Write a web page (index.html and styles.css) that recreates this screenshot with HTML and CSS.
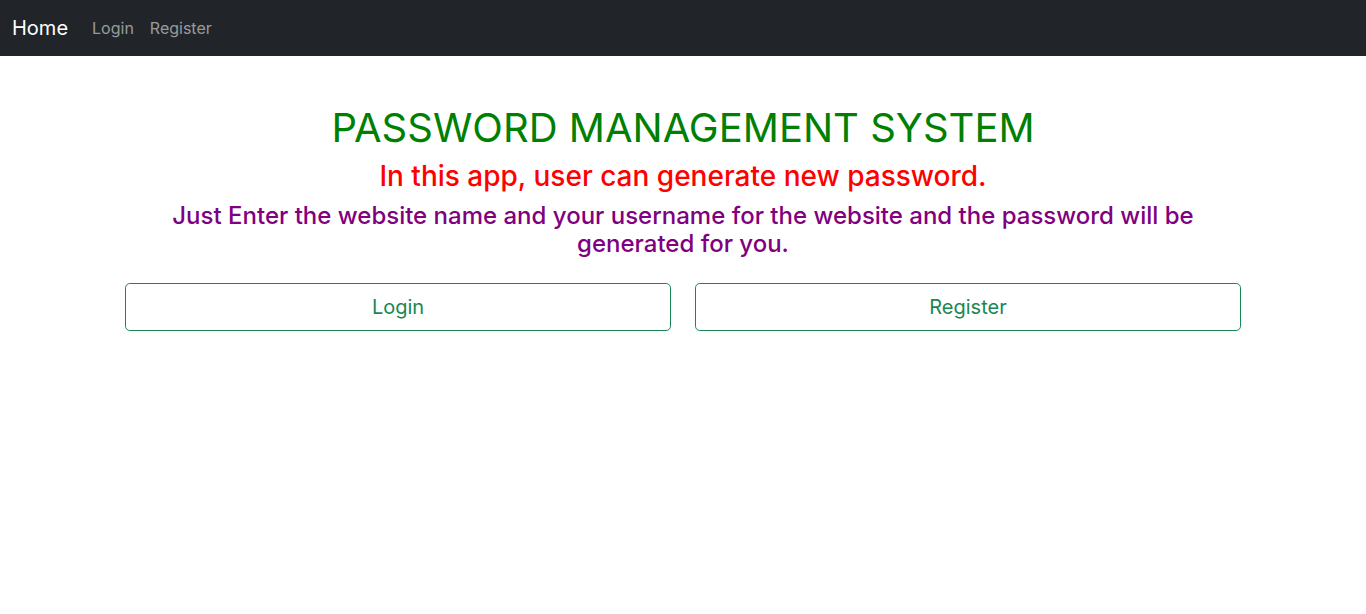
FILE: index.html
```html
<!DOCTYPE html>
<html lang="en">
<head>
<meta charset="utf-8">
<title>Password Management System</title>
<link rel="stylesheet" href="styles.css">
</head>
<body>
<nav class="navbar">
  <div class="navbar-inner">
    <a class="brand" href="#">Home</a>
    <ul class="nav">
      <li><a class="nav-link" href="#">Login</a></li>
      <li><a class="nav-link" href="#">Register</a></li>
    </ul>
  </div>
</nav>
<main class="container">
  <h1 class="title">PASSWORD MANAGEMENT SYSTEM</h1>
  <h3 class="subtitle">In this app, user can generate new password.</h3>
  <h4 class="desc">Just Enter the website name and your username for the website and the password will be generated for you.</h4>
  <div class="row">
    <div class="col"><a class="btn" href="#">Login</a></div>
    <div class="col"><a class="btn" href="#">Register</a></div>
  </div>
</main>
</body>
</html>
```
FILE: styles.css
```css
* { box-sizing: border-box; }
html, body { margin: 0; padding: 0; }
body {
  font-family: Inter, "Liberation Sans", sans-serif;
  font-size: 16px;
  line-height: 1.5;
  color: #212529;
  background: #fff;
}
a { text-decoration: none; }
.navbar {
  background: #212529;
  padding: 8px 0;
}
.navbar-inner {
  display: flex;
  align-items: center;
  padding: 0 12px;
  height: 40px;
}
.brand {
  font-size: 20px;
  line-height: 30px;
  color: #fff;
  margin-right: 16px;
  padding: 5px 0;
}
.nav {
  display: flex;
  list-style: none;
  margin: 0;
  padding: 0;
}
.nav-link {
  display: block;
  padding: 8px;
  color: rgba(255,255,255,.55);
}
.container {
  width: 1140px;
  margin: 48px auto 0;
  padding: 0 12px;
  text-align: center;
}
.title, .subtitle, .desc {
  font-weight: 500;
  line-height: 1.2;
  margin: 0 0 8px;
}
.title { font-size: 40px; font-weight: 400; color: green; }
.subtitle { font-size: 28px; color: red; }
.desc { font-size: 24px; color: purple; }
.row {
  display: flex;
  margin: 24px -12px 0;
}
.col {
  flex: 1;
  padding: 0 12px;
}
.btn {
  display: block;
  width: 100%;
  padding: 8px 16px;
  font-size: 20px;
  line-height: 1.5;
  color: #198754;
  border: 1px solid #198754;
  border-radius: 4.8px;
  background: transparent;
  text-align: center;
}
```
